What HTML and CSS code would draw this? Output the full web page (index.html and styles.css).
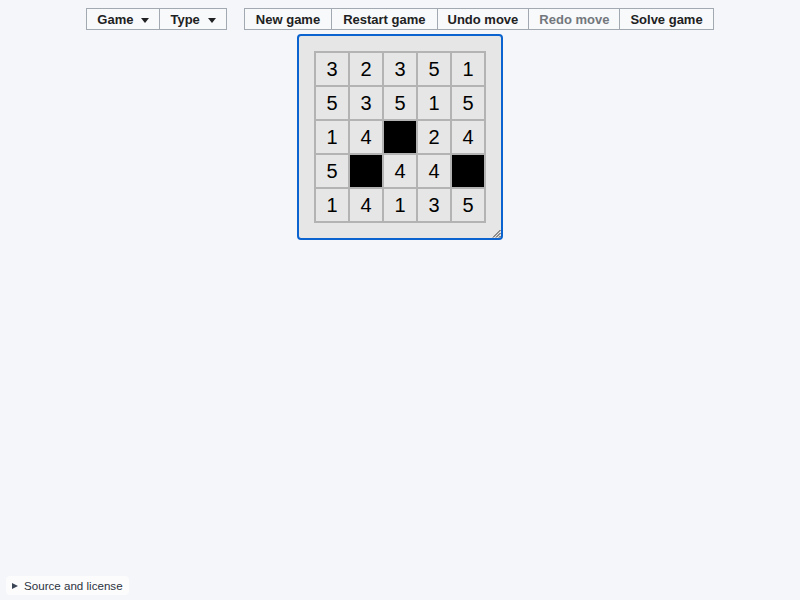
FILE: index.html
```html
<!DOCTYPE html>
<html>
<head>
<meta charset="utf-8">
<link rel="stylesheet" href="styles.css">
</head>
<body>
<div class="page">
  <nav class="menubar">
    <div class="group">
      <button class="btn btn-menu">Game <span class="caret"></span></button>
      <button class="btn btn-menu">Type <span class="caret"></span></button>
    </div>
    <div class="group">
      <button class="btn btn-new">New game</button>
      <button class="btn btn-restart">Restart game</button>
      <button class="btn btn-undo">Undo move</button>
      <button class="btn btn-redo disabled">Redo move</button>
      <button class="btn btn-solve">Solve game</button>
    </div>
  </nav>
  <main class="stage">
    <div class="puzzle">
      <div class="grid">
        <div class="cell">3</div><div class="cell">2</div><div class="cell">3</div><div class="cell">5</div><div class="cell">1</div>
        <div class="cell">5</div><div class="cell">3</div><div class="cell">5</div><div class="cell">1</div><div class="cell">5</div>
        <div class="cell">1</div><div class="cell">4</div><div class="cell black"></div><div class="cell">2</div><div class="cell">4</div>
        <div class="cell">5</div><div class="cell black"></div><div class="cell">4</div><div class="cell">4</div><div class="cell black"></div>
        <div class="cell">1</div><div class="cell">4</div><div class="cell">1</div><div class="cell">3</div><div class="cell">5</div>
      </div>
      <svg class="grip" width="9" height="9" viewBox="0 0 9 9">
        <path d="M8.5 1 L1 8.5 M8.5 4 L4 8.5 M8.5 7 L7 8.5" stroke="#333" stroke-width="1" fill="none"/>
      </svg>
    </div>
  </main>
  <footer class="footer">
    <div class="source"><span class="tri"></span>Source and license</div>
  </footer>
</div>
</body>
</html>
```
FILE: styles.css
```css
html, body {
  margin: 0;
  padding: 0;
  background: #f4f6fa;
  font-family: "Liberation Sans", Arial, sans-serif;
}
.page {
  display: flex;
  flex-direction: column;
  min-height: 600px;
  box-sizing: border-box;
  padding-top: 8px;
  padding-bottom: 5px;
}
.menubar {
  display: flex;
  justify-content: center;
  gap: 17px;
}
.group {
  display: flex;
  border: 1px solid #a2a9b1;
  background: #f8f9fa;
}
.btn {
  font-family: "Liberation Sans", Arial, sans-serif;
  font-size: 13px;
  font-weight: bold;
  color: #202122;
  background: transparent;
  border: 0;
  border-left: 1px solid #a2a9b1;
  box-sizing: border-box;
  height: 20px;
  padding: 1px 11px 0;
  margin: 0;
  display: flex;
  align-items: center;
  gap: 8px;
  line-height: 19px;
}
.btn:first-child {
  border-left: 0;
}
.btn-menu {
  padding-left: 10px;
  padding-right: 10px;
}
.btn.disabled {
  color: #72777d;
}
.btn-undo, .btn-redo, .btn-solve {
  padding-left: 10px;
  padding-right: 10px;
}
.caret {
  width: 0;
  height: 0;
  border-left: 4.5px solid transparent;
  border-right: 4.5px solid transparent;
  border-top: 5px solid #202122;
  margin-top: 1px;
}
.stage {
  display: flex;
  justify-content: center;
  margin-top: 4px;
}
.puzzle {
  position: relative;
  border: 2px solid #0b63d0;
  border-radius: 4px;
  background: #e6e6e6;
  padding: 15px;
}
.grid {
  display: grid;
  grid-template-columns: repeat(5, 32px);
  grid-auto-rows: 32px;
  gap: 2px;
  padding: 2px;
  background: #b3b3b3;
}
.cell {
  background: #e6e6e6;
  display: flex;
  align-items: center;
  justify-content: center;
  font-family: "Liberation Sans", Arial, sans-serif;
  font-size: 20px;
  color: #000;
}
.cell.black {
  background: #000;
}
.grip {
  position: absolute;
  right: 0;
  bottom: 0;
}
.footer {
  margin-top: auto;
  display: flex;
  padding-left: 6px;
}
.source {
  background: #fcfcfd;
  border-radius: 4px;
  height: 19px;
  display: flex;
  align-items: center;
  padding: 0 6px;
  font-size: 11.6px;
  color: #2c3340;
}
.tri {
  width: 0;
  height: 0;
  border-top: 3.5px solid transparent;
  border-bottom: 3.5px solid transparent;
  border-left: 6px solid #3a4556;
  margin-right: 6px;
}
```
